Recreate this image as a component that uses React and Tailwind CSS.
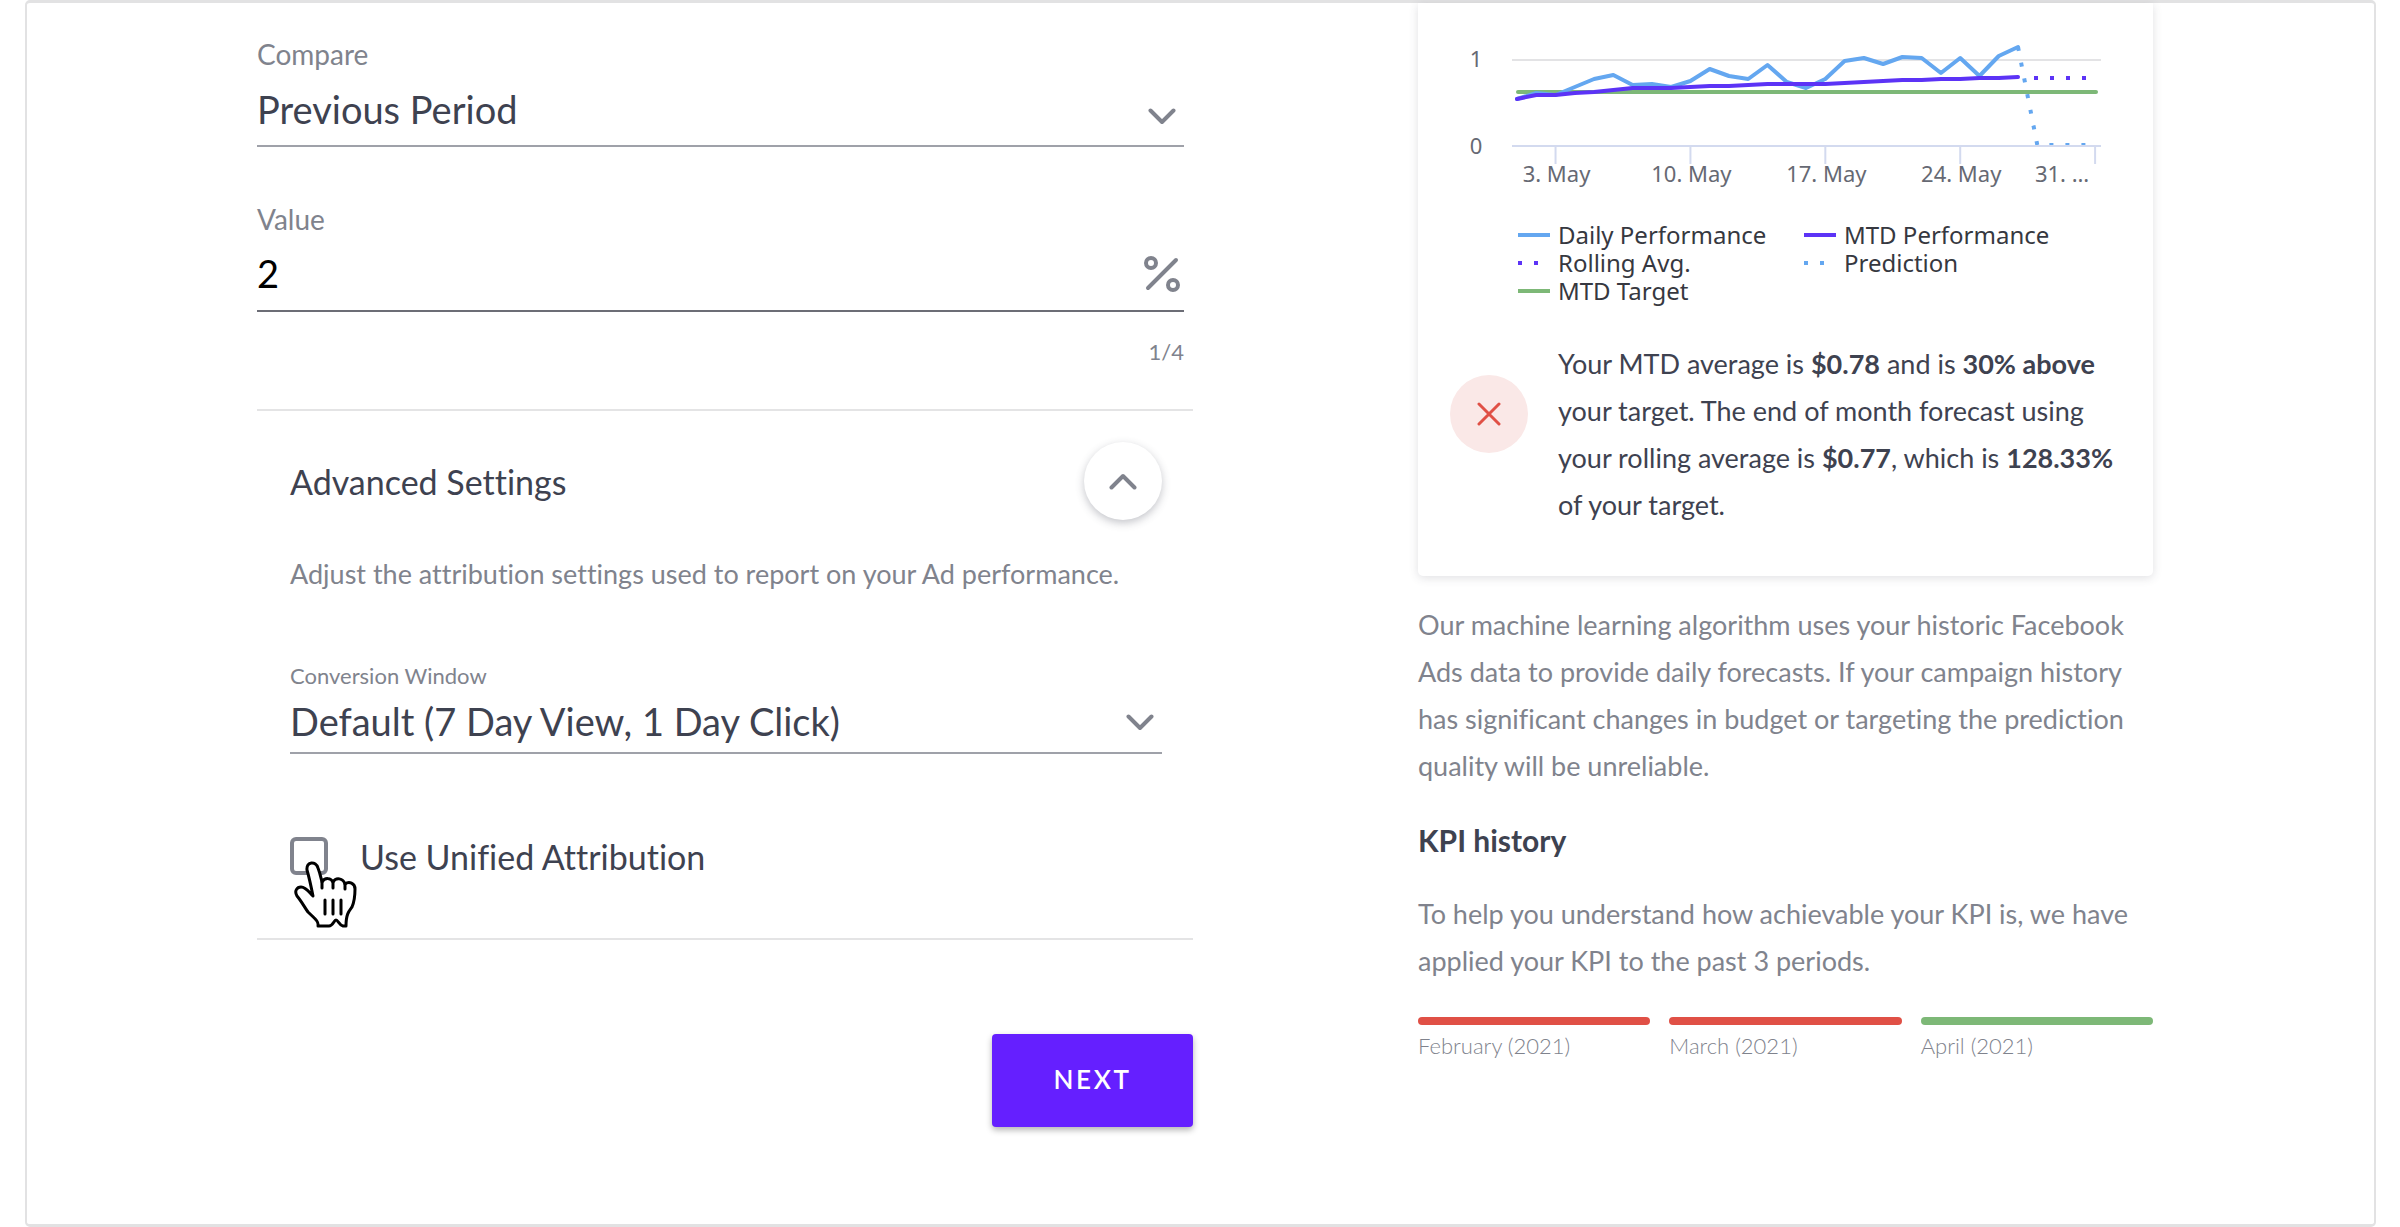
import { useState } from 'react';

const BLUE = '#64a7f0';
const PURPLE = '#5c33f6';
const GREEN = '#7db877';

// y positions on the plot, one per day of the month
const DAILY = [
  99, 93, 95, 87, 79, 75, 85, 84, 87, 81, 69, 76, 79, 65, 82, 88, 79, 61, 58, 64, 57, 58, 73, 58, 76, 56, 47,
];
const MTD = [
  99, 95, 95, 93, 92, 90, 88, 88, 88, 87, 86, 86, 85, 84, 84, 84, 84, 83, 82, 81, 80, 80, 79, 79, 78, 78, 77,
];

const TICKS = [
  { day: 3,  label: '3. May' },
  { day: 10, label: '10. May' },
  { day: 17, label: '17. May' },
  { day: 24, label: '24. May' },
];

const LEGEND = [
  { label: 'Daily Performance', color: BLUE },
  { label: 'MTD Performance',   color: PURPLE },
  { label: 'Rolling Avg.',      color: PURPLE, dotted: true },
  { label: 'Prediction',        color: BLUE,   dotted: true },
  { label: 'MTD Target',        color: GREEN },
];

const HISTORY = [
  { label: 'February (2021)', bar: 'bg-[#e05046]' },
  { label: 'March (2021)',    bar: 'bg-[#e05046]' },
  { label: 'April (2021)',    bar: 'bg-[#7db877]' },
];

const dayX = (day) => 99 + (day - 1) * 19.27;
const toPoints = (values) => values.map((y, i) => `${dayX(i + 1)},${y - 3}`).join(' ');

function Chevron({ up }) {
  return (
    <svg width="28" height="17" viewBox="0 0 28 17" fill="none" stroke="#80838d" strokeWidth="4" strokeLinecap="round" strokeLinejoin="round" aria-hidden="true">
      <path d={up ? 'M2.5 14.5 14 3 25.5 14.5' : 'M2.5 2.5 14 14 25.5 2.5'} />
    </svg>
  );
}

function SelectField({ id, value, height, iconPad }) {
  return (
    <div className={`relative flex items-center border-b-2 border-[#9fa1a9] ${height}`}>
      <select id={id} className="w-full h-full appearance-none bg-transparent text-[38px] text-[#3e4250] outline-none">
        <option>{value}</option>
      </select>
      <span className={`pointer-events-none absolute ${iconPad}`}>
        <Chevron />
      </span>
    </div>
  );
}

function Chart() {
  return (
    <svg className="block w-full" viewBox="0 0 735 218" fill="none" role="img" aria-label="Daily performance in May">
      <path d="M94 57H683" stroke="#e3e3e5" strokeWidth="2" />
      <polyline points={`${dayX(27)},44 ${dayX(28)},142 ${dayX(31)},142`} stroke={BLUE} strokeWidth="4" strokeDasharray="4 12" />
      <path d="M94 143H683" stroke="#d3daef" strokeWidth="2" />
      {[3, 10, 17, 24, 31].map(day => (
        <path key={day} d={`M${dayX(day)} 143V161`} stroke="#d3daef" strokeWidth="2" />
      ))}
      <path d="M100 89H678" stroke={GREEN} strokeWidth="4" strokeLinecap="round" />
      <polyline points={toPoints(DAILY)} stroke={BLUE} strokeWidth="4" strokeLinecap="round" strokeLinejoin="round" />
      <polyline points={toPoints(MTD)} stroke={PURPLE} strokeWidth="4" strokeLinecap="round" strokeLinejoin="round" />
      <path d="M616 75H670" stroke={PURPLE} strokeWidth="4" strokeDasharray="4 12" />
      <g className="font-['Noto_Sans',sans-serif] text-[22px]" fill="#666973" textAnchor="middle">
        <text x="58" y="64">1</text>
        <text x="58" y="151">0</text>
        {TICKS.map(({ day, label }) => (
          <text key={day} x={dayX(day) + 1} y="179">{label}</text>
        ))}
        <text x="644" y="179">31. …</text>
      </g>
    </svg>
  );
}

function Legend() {
  return (
    <ul className="grid grid-cols-[286px_1fr] pl-[100px] font-['Noto_Sans',sans-serif] text-[24px] leading-7 text-[#363840]">
      {LEGEND.map(({ label, color, dotted }) => (
        <li key={label} className="flex items-center gap-2">
          <svg width="32" height="4" viewBox="0 0 32 4" aria-hidden="true">
            <path d="M0 2H32" stroke={color} strokeWidth="4" strokeDasharray={dotted ? '4 12 4 20' : undefined} />
          </svg>
          {label}
        </li>
      ))}
    </ul>
  );
}

function HandCursor() {
  return (
    <svg className="pointer-events-none absolute left-1 top-6" width="64" height="68" viewBox="0 0 64 68" fill="#fff" stroke="#000" strokeWidth="3" strokeLinejoin="round" strokeLinecap="round" aria-hidden="true">
      <path d="M24 65C25 60 20 57 14 51C11 47 8 41 3 35C0 30 3 26 7 26C12 26 15 31 19 35C17 25 15 16 13 9C12 0 22 0 24 7C26 12 27 17 28 21C31 16 37 17 39 21C42 16 49 17 51 23C55 20 61 22 61 28C61 35 61 39 58 46C55 50 52 53 52 65L49 65C45 64 44 59 42 59C40 59 39 65 35 65Z" />
      <path d="M28 21V27M39 21V27M51 23V28M31 39V53M39 39V53M47 39V53" />
    </svg>
  );
}

export default function App() {
  const [value, setValue] = useState('2');
  const [unified, setUnified] = useState(false);

  return (
    <div className="min-h-screen flex flex-col bg-white pl-[25px] pr-6 font-[Lato,sans-serif] [font-variant-ligatures:none] text-[#3e4250]">
      <main className="flex-1 grid grid-cols-[936fr_735fr] gap-x-[225px] pl-[230px] pr-[221px] border-x-2 border-y-3 border-[#e2e2e3] rounded-[5px]">
        {/* Settings form */}
        <form className="pt-[33px]" onSubmit={e => e.preventDefault()}>
          <div className="pr-[9px]">
            <label htmlFor="compare" className="block text-[28px] leading-9 text-[#80838d]">Compare</label>
            <SelectField id="compare" value="Previous Period" height="h-[75px] pt-0.5" iconPad="right-2 top-9" />

            <label htmlFor="value" className="block mt-[54px] text-[28px] leading-9 text-[#80838d]">Value</label>
            <div className="flex items-center h-[75px] border-b-2 border-[#6c6d76]">
              <input
                id="value"
                className="flex-1 h-full pb-0.5 bg-transparent text-[38px] text-black outline-none"
                value={value}
                onChange={e => setValue(e.target.value)}
              />
              <svg className="mr-1" width="36" height="36" viewBox="0 0 36 36" fill="none" stroke="#80838d" strokeWidth="4" strokeLinecap="round" aria-hidden="true">
                <path d="M4 32 32 4" />
                <circle cx="7" cy="7" r="5" />
                <circle cx="29" cy="29" r="5" />
              </svg>
            </div>
            <p className="mt-[26px] text-right text-[22px] leading-7 text-[#80838d]">{value.length}/4</p>
          </div>

          <section className="mt-[43px] pt-[31px] pb-[63px] pl-[33px] pr-[31px] border-y-2 border-[#e4e4e5]">
            <div className="flex items-center justify-between">
              <h2 className="text-[34px]">Advanced Settings</h2>
              <button type="button" aria-label="Collapse" className="size-[78px] flex items-center justify-center rounded-full bg-white shadow-[0_3px_8px_rgba(60,64,80,0.3)]">
                <Chevron up />
              </button>
            </div>
            <p className="mt-9 text-[27px] leading-9 text-[#80838d]">
              Adjust the attribution settings used to report on your Ad performance.
            </p>

            <label htmlFor="window" className="block mt-[70px] text-[22px] leading-7 text-[#80838d]">Conversion Window</label>
            <SelectField id="window" value="Default (7 Day View, 1 Day Click)" height="h-16" iconPad="right-2 top-6" />

            <div className="relative flex items-center mt-[83px] h-[38px] text-[34px]">
              <input
                id="unified"
                type="checkbox"
                className="size-[38px] appearance-none border-4 border-[#80838d] rounded-[6px] checked:bg-[#651fff]"
                checked={unified}
                onChange={e => setUnified(e.target.checked)}
              />
              <label htmlFor="unified" className="pl-8">Use Unified Attribution</label>
              <HandCursor />
            </div>
          </section>

          <div className="flex justify-end mt-[94px]">
            <button type="submit" className="w-[201px] h-[93px] pb-0.5 rounded-[4px] bg-[#651fff] text-white text-[26px] font-semibold tracking-widest shadow-[0_3px_6px_rgba(0,0,0,0.3)]">
              NEXT
            </button>
          </div>
        </form>

        {/* Forecast */}
        <aside>
          <div className="pb-12 rounded-b-[5px] bg-white shadow-[0_2px_10px_rgba(60,64,80,0.16)]">
            <Chart />
            <Legend />
            <div className="flex items-start gap-[30px] mt-[35px] pl-8 pr-6">
              <div className="size-[78px] mt-[35px] shrink-0 flex items-center justify-center rounded-full bg-[#fae8e7]">
                <svg width="24" height="24" viewBox="0 0 24 24" stroke="#e05046" strokeWidth="3" strokeLinecap="round" aria-hidden="true">
                  <path d="M2 2 22 22M22 2 2 22" />
                </svg>
              </div>
              <p className="text-[27px] leading-[47px]">
                Your MTD average is <b>$0.78</b> and is <b>30% above</b> your target. The end of month forecast using
                your rolling average is <b>$0.77</b>, which is <b>128.33%</b> of your target.
              </p>
            </div>
          </div>

          <p className="mt-[25px] text-[27px] leading-[47px] text-[#80838d]">
            Our machine learning algorithm uses your historic Facebook Ads data to provide daily forecasts. If your
            campaign history has significant changes in budget or targeting the prediction quality will be unreliable.
          </p>
          <h3 className="mt-7 text-[30px] leading-[47px] font-bold">KPI history</h3>
          <p className="mt-[26px] text-[27px] leading-[47px] text-[#80838d]">
            To help you understand how achievable your KPI is, we have applied your KPI to the past 3 periods.
          </p>
          <div className="grid grid-cols-3 gap-x-[19px] mt-[33px]">
            {HISTORY.map(({ label, bar }) => (
              <div key={label}>
                <div className={`h-2 rounded-full ${bar}`} />
                <p className="mt-[7px] text-[22px] leading-7 font-light text-[#80838d]">{label}</p>
              </div>
            ))}
          </div>
        </aside>
      </main>
    </div>
  );
}
